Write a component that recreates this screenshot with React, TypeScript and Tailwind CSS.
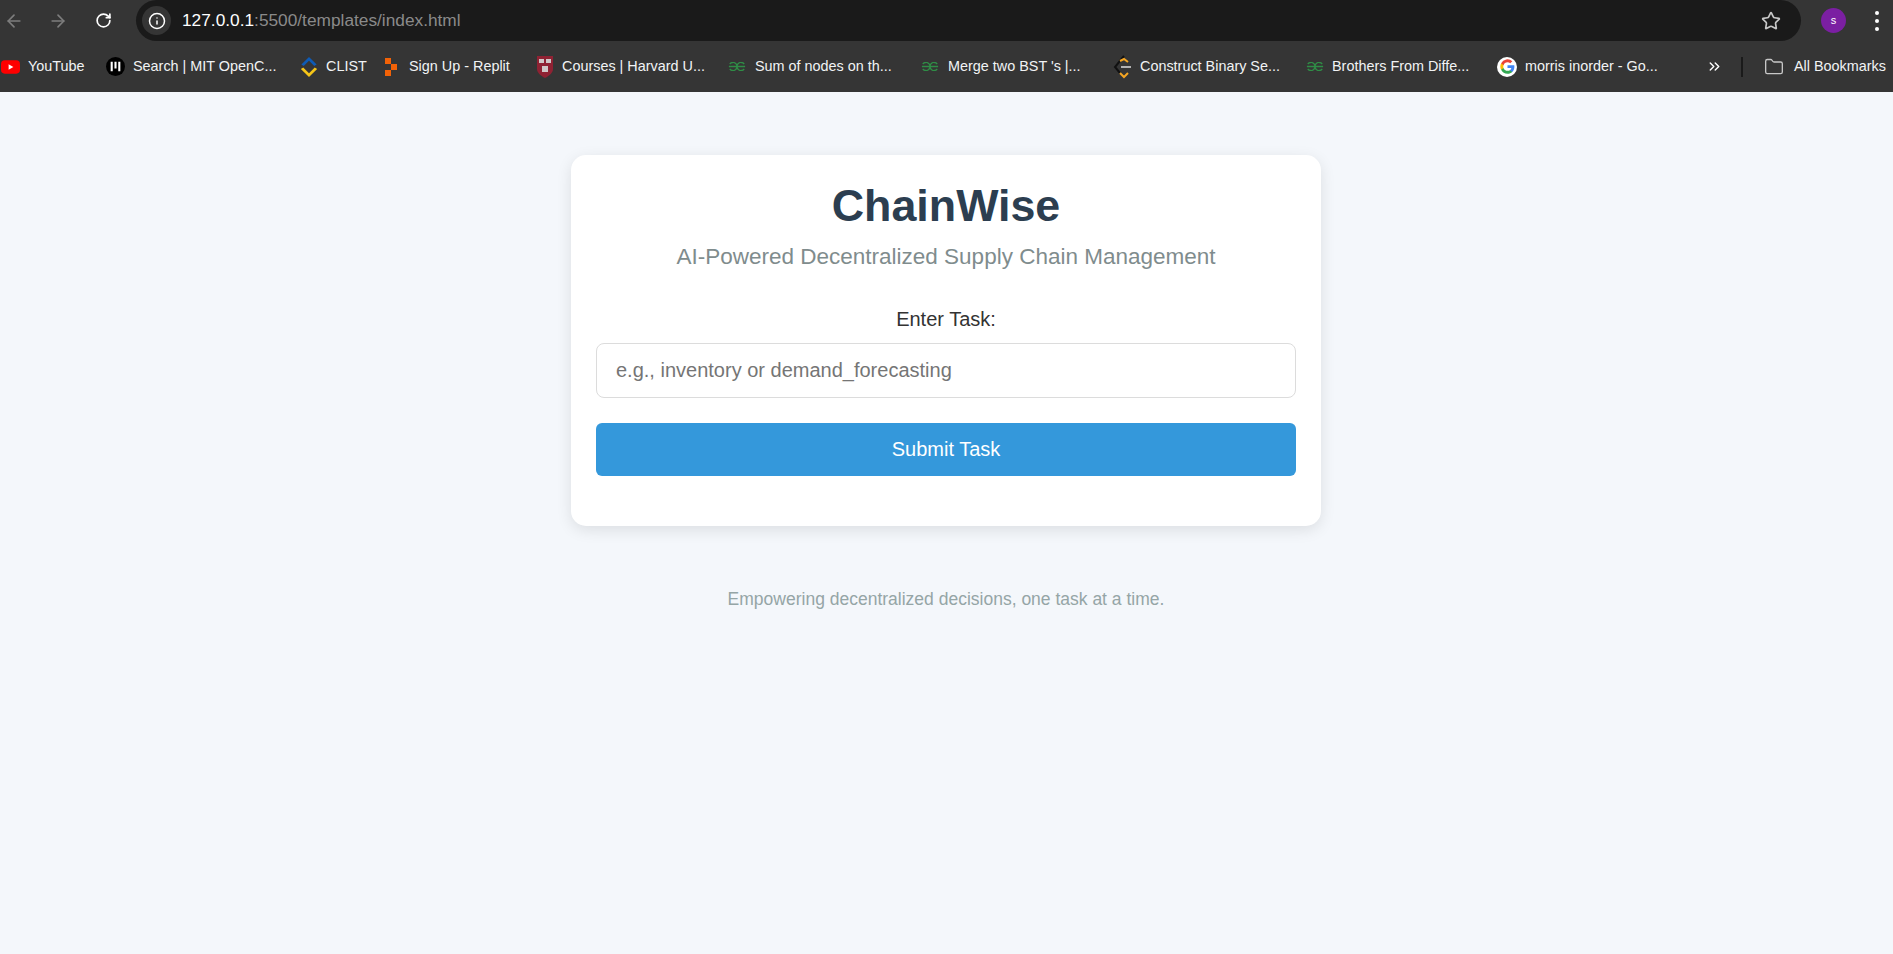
import { ArrowLeft, ArrowRight, ChevronsRight, Folder, Info, RotateCw, Star } from "lucide-react";

function YouTubeIcon() {
  return (
    <svg viewBox="0 0 20 14" className="h-[14px] w-[19px] shrink-0">
      <rect width="20" height="14" rx="4" fill="#f00" />
      <path d="M8 4l5 3-5 3z" fill="#fff" />
    </svg>
  );
}

function MitIcon() {
  return (
    <svg viewBox="0 0 20 20" className="h-[19px] w-[19px] shrink-0">
      <circle cx="10" cy="10" r="10" fill="#000" />
      <path d="M6 5v10M10 5v7M14 5v10" stroke="#fff" strokeWidth="2.2" />
    </svg>
  );
}

function ClistIcon() {
  return (
    <svg viewBox="0 0 18 24" className="h-[23px] w-[18px] shrink-0">
      <path d="M1 10l8-8 8 8-2.5 1.5L9 6l-5.500 5.500z" fill="#0f5bb5" />
      <path d="M3 13l6 6 6-6 2.500 1.500L9 23 .5 14.500z" fill="#f5c518" />
    </svg>
  );
}

function ReplitIcon() {
  return (
    <svg viewBox="0 0 12 18" className="h-[18px] w-[12px] shrink-0">
      <path d="M0 0h6v6H0zM6 6h6v6H6zM0 12h6v6H0z" fill="#f26207" />
    </svg>
  );
}

function HarvardIcon() {
  return (
    <svg viewBox="0 0 16 22" className="h-[22px] w-[16px] shrink-0">
      <path d="M0 0h16v13c0 4-4 7-8 9-4-2-8-5-8-9z" fill="#8f2233" />
      <path d="M2 3h5v4H2zM9 3h5v4H9zM5 10h6v6H5z" fill="#d0c8c8" />
    </svg>
  );
}

function GfgIcon() {
  return (
    <svg viewBox="0 0 20 10" className="h-[9px] w-[18px] shrink-0" fill="none" stroke="#2f8d46" strokeWidth="1.500">
      <path d="M1 5H19M2 2.200A4.500 4.500 0 1 1 2 7.800M18 2.200A4.500 4.500 0 1 0 18 7.800" />
    </svg>
  );
}

function LeetIcon() {
  return (
    <svg viewBox="0 0 18 24" className="h-[24px] w-[18px] shrink-0" fill="none" strokeWidth="2">
      <path d="M11 1L2 12l5 6" stroke="#111" />
      <path d="M7 18l4 4 4-4" stroke="#f5a623" />
      <path d="M7 6l4-2 4 3" stroke="#f5a623" />
      <path d="M8 12h10" stroke="#b3b3b3" />
    </svg>
  );
}

function GoogleIcon() {
  return (
    <div className="flex h-[20px] w-[20px] shrink-0 items-center justify-center rounded-full bg-white">
      <svg viewBox="0 0 24 24" className="h-[15px] w-[15px]">
        <path d="M23 12.300c0-.8-.1-1.600-.2-2.300H12v4.400h6.200a5.300 5.300 0 0 1-2.300 3.500v2.900h3.700c2.200-2 3.400-5 3.400-8.500z" fill="#4285f4" />
        <path d="M12 23.500c3.100 0 5.700-1 7.600-2.800l-3.700-2.900c-1 .7-2.300 1.100-3.900 1.100-3 0-5.500-2-6.400-4.700H1.800v3A11.500 11.500 0 0 0 12 23.500z" fill="#34a853" />
        <path d="M5.600 14.200a6.900 6.900 0 0 1 0-4.400v-3H1.800a11.500 11.500 0 0 0 0 10.400z" fill="#fbbc05" />
        <path d="M12 5.100c1.700 0 3.200.6 4.400 1.700l3.300-3.300A11.500 11.500 0 0 0 1.800 6.800l3.800 3c.9-2.700 3.400-4.700 6.400-4.700z" fill="#ea4335" />
      </svg>
    </div>
  );
}

function Bookmark({ icon, label, className }: { icon: React.ReactNode; label: string; className: string }) {
  return (
    <div className={`flex shrink-0 items-center whitespace-nowrap ${className}`}>
      {icon}
      <span className="text-[14.4px] leading-none text-[#f1f3f4]">{label}</span>
    </div>
  );
}

export default function App() {
  return (
    <div className="flex min-h-[954px] flex-col bg-[#f4f7fb] font-['Liberation_Sans',Arial,sans-serif]">
      {/* browser toolbar */}
      <div className="flex h-[41px] items-center bg-[#353535]">
        <ArrowLeft className="ml-[4px] h-[20px] w-[20px] text-[#7d7d7d]" />
        <ArrowRight className="ml-[24px] h-[20px] w-[20px] text-[#7d7d7d]" />
        <RotateCw className="ml-[27px] h-[17px] w-[17px] text-white" strokeWidth={2.4} />
        <div className="ml-[24px] flex h-[41px] w-[1665px] items-center rounded-l-[21px] rounded-r-[21px] bg-[#1a1a1a]">
          <div className="ml-[6px] flex h-[29px] w-[29px] items-center justify-center rounded-full bg-[#353535]">
            <Info className="h-[18px] w-[18px] text-white" />
          </div>
          <span className="ml-[11px] text-[17.3px] text-white">
            127.0.0.1<span className="text-[#8a8a8a]">:5500/templates/index.html</span>
          </span>
          <Star className="ml-auto mr-[20px] h-[20px] w-[20px] text-[#c7c7c7]" strokeWidth={2} />
        </div>
        <div className="ml-[20px] flex h-[25px] w-[25px] items-center justify-center rounded-full bg-[#7b1fa2] text-[11px] text-white">
          s
        </div>
        <div className="ml-[29px] flex flex-col gap-[4px]">
          <div className="h-[4px] w-[4px] rounded-full bg-white" />
          <div className="h-[4px] w-[4px] rounded-full bg-white" />
          <div className="h-[4px] w-[4px] rounded-full bg-white" />
        </div>
      </div>

      {/* bookmarks bar */}
      <div className="flex h-[51px] items-center overflow-hidden bg-[#353535] pl-[1px]">
        <Bookmark icon={<YouTubeIcon />} label="YouTube" className="w-[105px] gap-[8px]" />
        <Bookmark icon={<MitIcon />} label="Search | MIT OpenC..." className="w-[194px] gap-[8px]" />
        <Bookmark icon={<ClistIcon />} label="CLIST" className="w-[85px] gap-[8px]" />
        <Bookmark icon={<ReplitIcon />} label="Sign Up - Replit" className="w-[152px] gap-[12px]" />
        <Bookmark icon={<HarvardIcon />} label="Courses | Harvard U..." className="w-[191px] gap-[9px]" />
        <Bookmark icon={<GfgIcon />} label="Sum of nodes on th..." className="w-[193px] gap-[9px]" />
        <Bookmark icon={<GfgIcon />} label="Merge two BST 's |..." className="w-[192px] gap-[9px]" />
        <Bookmark icon={<LeetIcon />} label="Construct Binary Se..." className="w-[193px] gap-[9px]" />
        <Bookmark icon={<GfgIcon />} label="Brothers From Diffe..." className="w-[191px] gap-[8px]" />
        <Bookmark icon={<GoogleIcon />} label="morris inorder - Go..." className="w-[209px] gap-[8px]" />
        <ChevronsRight className="h-[17px] w-[17px] shrink-0 text-white" />
        <div className="ml-[18px] h-[20px] w-[2px] shrink-0 bg-[#1a1a1a]" />
        <Folder className="ml-[21px] h-[20px] w-[20px] shrink-0 text-[#c7c7c7]" strokeWidth={1.6} />
        <span className="ml-[10px] whitespace-nowrap text-[14.4px] leading-none text-[#f1f3f4]">All Bookmarks</span>
      </div>

      {/* page */}
      <div className="flex flex-col items-center pr-[1px] pt-[63px]">
        <div className="flex h-[371px] w-[750px] flex-col items-center rounded-[15px] bg-white px-[25px] pt-[25px] shadow-[0_4px_15px_rgba(0,0,0,0.1)]">
          <h1 className="text-[44.8px] font-bold leading-[51px] text-[#2c3e50]">ChainWise</h1>
          <p className="mt-[13px] text-[22.5px] leading-[26px] text-[#7f8c8d]">AI-Powered Decentralized Supply Chain Management</p>
          <label htmlFor="task" className="mt-[38px] text-[20px] leading-[22px] text-[#333]">
            Enter Task:
          </label>
          <input
            id="task"
            type="text"
            placeholder="e.g., inventory or demand_forecasting"
            className="mt-[13px] h-[55px] w-full rounded-[8px] border border-[#dcdcdc] bg-white px-[19px] text-[20px] outline-none placeholder:text-[#757575]"
          />
          <button className="mt-[25px] h-[53px] w-full rounded-[6px] bg-[#3498db] pb-[2px] text-[20px] text-white">
            Submit Task
          </button>
        </div>
        <p className="mt-[63px] text-[17.5px] leading-[20px] text-[#95a5a6]">Empowering decentralized decisions, one task at a time.</p>
      </div>
    </div>
  );
}
